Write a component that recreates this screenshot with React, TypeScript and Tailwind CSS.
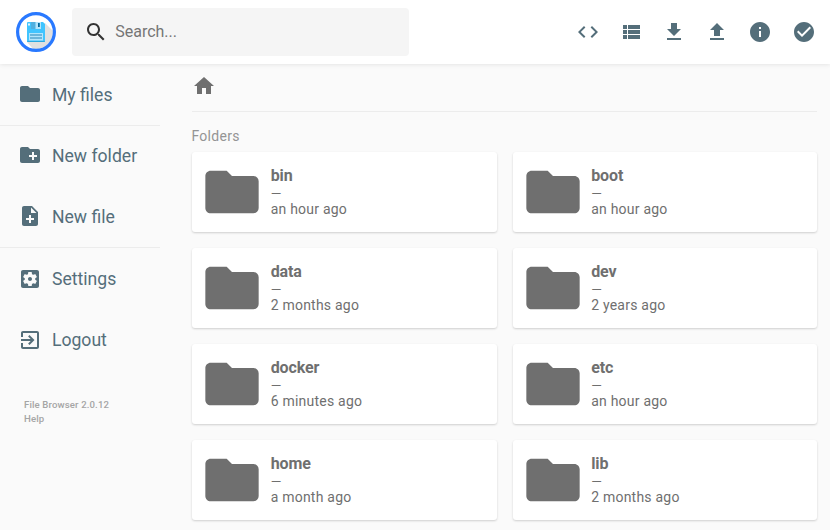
const ICONS = {
  search: "M15.5 14h-.79l-.28-.27C15.41 12.59 16 11.11 16 9.5 16 5.91 13.09 3 9.5 3S3 5.91 3 9.5 5.91 16 9.5 16c1.61 0 3.09-.59 4.23-1.57l.27.28v.79l5 4.99L20.49 19l-4.99-5zm-6 0C7.01 14 5 11.99 5 9.5S7.01 5 9.5 5 14 7.01 14 9.5 11.99 14 9.5 14z",
  code: "M9.4 16.6L4.8 12l4.6-4.6L8 6l-6 6 6 6 1.4-1.4zm5.2 0l4.6-4.6-4.6-4.6L16 6l6 6-6 6-1.4-1.4z",
  viewList: "M4 14h4v-4H4v4zm0 5h4v-4H4v4zM4 9h4V5H4v4zm5 5h12v-4H9v4zm0 5h12v-4H9v4zM9 5v4h12V5H9z",
  download: "M19 9h-4V3H9v6H5l7 7 7-7zM5 18v2h14v-2H5z",
  upload: "M9 16h6v-6h4l-7-7-7 7h4zm-4 2h14v2H5z",
  info: "M12 2C6.48 2 2 6.48 2 12s4.48 10 10 10 10-4.48 10-10S17.52 2 12 2zm1 15h-2v-6h2v6zm0-8h-2V7h2v2z",
  check: "M12 2C6.48 2 2 6.48 2 12s4.48 10 10 10 10-4.48 10-10S17.52 2 12 2zm-2 15l-5-5 1.41-1.41L10 14.17l7.59-7.59L19 8l-9 9z",
  folder: "M10 4H4c-1.1 0-1.99.9-1.99 2L2 18c0 1.1.9 2 2 2h16c1.1 0 2-.9 2-2V8c0-1.1-.9-2-2-2h-8l-2-2z",
  newFolder: "M20 6h-8l-2-2H4c-1.11 0-1.99.89-1.99 2L2 18c0 1.11.89 2 2 2h16c1.11 0 2-.89 2-2V8c0-1.11-.89-2-2-2zm-1 8h-3v3h-2v-3h-3v-2h3V9h2v3h3v2z",
  newFile: "M14 2H6c-1.1 0-1.99.9-1.99 2L4 20c0 1.1.89 2 1.99 2H18c1.1 0 2-.9 2-2V8l-6-6zm2 14h-3v3h-2v-3H8v-2h3v-3h2v3h3v2zm-3-7V3.5L18.5 9H13z",
  settings: "M12 10c-1.1 0-2 .9-2 2s.9 2 2 2 2-.9 2-2-.9-2-2-2zm7-7H5c-1.11 0-2 .9-2 2v14c0 1.1.89 2 2 2h14c1.11 0 2-.9 2-2V5c0-1.1-.89-2-2-2zm-1.75 9c0 .23-.02.46-.05.68l1.48 1.16c.13.11.17.3.08.45l-1.4 2.42c-.09.15-.27.21-.43.15l-1.74-.7c-.36.28-.76.51-1.18.69l-.26 1.85c-.03.17-.18.3-.35.3h-2.8c-.17 0-.32-.13-.35-.29l-.26-1.85c-.43-.18-.82-.41-1.18-.69l-1.74.7c-.16.06-.34 0-.43-.15l-1.4-2.42c-.09-.15-.05-.34.08-.45l1.48-1.16c-.03-.23-.05-.46-.05-.69 0-.23.02-.46.05-.68l-1.48-1.16c-.13-.11-.17-.3-.08-.45l1.4-2.42c.09-.15.27-.21.43-.15l1.74.7c.36-.28.76-.51 1.18-.69l.26-1.85c.03-.17.18-.3.35-.3h2.8c.17 0 .32.13.35.29l.26 1.85c.43.18.82.41 1.18.69l1.74-.7c.16-.06.34 0 .43.15l1.4 2.42c.09.15.05.34-.08.45l-1.48 1.16c.03.23.05.46.05.69z",
  logout: "M10.09 15.59L11.5 17l5-5-5-5-1.41 1.41L12.67 11H3v2h9.67l-2.58 2.59zM19 3H5c-1.11 0-2 .9-2 2v4h2V5h14v14H5v-4H3v4c0 1.1.89 2 2 2h14c1.1 0 2-.9 2-2V5c0-1.1-.9-2-2-2z",
  home: "M10 20v-6h4v6h5v-8h3L12 3 2 12h3v8z",
};

type IconName = keyof typeof ICONS;

function Icon({ name, className = "size-6" }: { name: IconName; className?: string }) {
  return (
    <svg viewBox="0 0 24 24" fill="currentColor" className={`shrink-0 ${className}`}>
      <path d={ICONS[name]} />
    </svg>
  );
}

function Logo() {
  return (
    <svg viewBox="0 0 40 40" className="size-10 shrink-0">
      <circle cx="20" cy="20" r="18.5" fill="#fff" />
      <path d="M29 11l7.8 7.8A17 17 0 0 1 17 37L11 30z" fill="#e0e0e0" />
      <circle cx="20" cy="20" r="18.4" fill="none" stroke="#2979ff" strokeWidth="3.2" />
      <path d="M12 10h15l2 2v17a1 1 0 0 1-1 1H12a1 1 0 0 1-1-1V11a1 1 0 0 1 1-1z" fill="#40c4ff" />
      <path d="M11 29h18a1 1 0 0 1-1 1H12a1 1 0 0 1-1-1z" fill="#29a9e0" />
      <path d="M15 10h10v7H15z" fill="#b3e5fc" />
      <path d="M15 10h4.5v7H15z" fill="#4fb0e0" />
      <path d="M22 11h1.8v4H22z" fill="#01679b" />
      <path d="M12 11.5h2v2h-2z" fill="#e1f5fe" />
      <path d="M13 21h14v7.5H13z" fill="#b3e5fc" />
      <path d="M14 22.6h12v1H14zM14 25.4h12v1H14z" fill="#2686b8" />
    </svg>
  );
}

function SideAction({ icon, label, iconClassName = "mb-px size-6" }: { icon: IconName; label: string; iconClassName?: string }) {
  return (
    <button className="flex h-[61px] w-full items-center pl-[18.4px] text-left">
      <Icon name={icon} className={iconClassName} />
      <span className="ml-[9.6px] text-[17.6px] leading-6">{label}</span>
    </button>
  );
}

function FolderCard({ name, modified }: { name: string; modified: string }) {
  return (
    <div className="flex h-20 items-center rounded-[3px] bg-white pl-2 shadow-[0_1px_3px_rgba(0,0,0,0.06),0_1px_2px_rgba(0,0,0,0.12)]">
      <Icon name="folder" className="size-16" />
      <div className="ml-[6.7px]">
        <p className="text-[16px] leading-[18px] font-bold tracking-[-0.12px]">{name}</p>
        <p className="text-[13.6px] leading-4 tracking-[0.4px]">—</p>
        <p className="text-[14px] leading-[17px] tracking-[0.22px]">{modified}</p>
      </div>
    </div>
  );
}

const TOOLS: IconName[] = ["code", "viewList", "download", "upload", "info", "check"];

const FOLDERS = [
  { name: "bin", modified: "an hour ago" },
  { name: "boot", modified: "an hour ago" },
  { name: "data", modified: "2 months ago" },
  { name: "dev", modified: "2 years ago" },
  { name: "docker", modified: "6 minutes ago" },
  { name: "etc", modified: "an hour ago" },
  { name: "home", modified: "a month ago" },
  { name: "lib", modified: "2 months ago" },
];

export default function App() {
  return (
    <div className="flex h-[530px] w-[830px] flex-col overflow-hidden bg-[#fafafa] font-[Roboto,sans-serif] text-[#6f6f6f]">
      <header className="z-10 flex h-16 shrink-0 items-center bg-white pr-[4.9px] pl-4 shadow-[0_0_5px_rgba(0,0,0,0.12)]">
        <Logo />
        <div className="ml-4 flex h-12 w-[337px] items-center rounded-[4px] bg-[#f5f5f5] pl-3">
          <Icon name="search" className="size-6 text-[#333]" />
          <input
            placeholder="Search..."
            className="ml-[7.2px] w-60 bg-transparent text-[16px] outline-none placeholder:text-[#757575]"
          />
        </div>
        <div className="ml-auto flex text-[#546e7a]">
          {TOOLS.map((tool) => (
            <button key={tool} className="p-[9.6px]">
              <Icon name={tool} />
            </button>
          ))}
        </div>
      </header>
      <div className="flex min-h-0 flex-1">
        <nav className="w-40 shrink-0 text-[#546e7a]">
          <div className="border-b border-[#ececec]">
            <SideAction icon="folder" label="My files" />
          </div>
          <div className="-mt-px border-b border-[#ececec]">
            <SideAction icon="newFolder" label="New folder" />
            <SideAction icon="newFile" label="New file" />
          </div>
          <SideAction icon="settings" label="Settings" iconClassName="size-6" />
          <SideAction icon="logout" label="Logout" iconClassName="size-6" />
          <div className="mt-[28px] pl-6 text-[9.6px] leading-[14px] font-medium tracking-[0.13px] text-[#a5a5a5]">
            <p>File Browser 2.0.12</p>
            <p>Help</p>
          </div>
        </nav>
        <main className="ml-8 w-[625px] shrink-0">
          <div className="flex h-12 items-center border-b border-[#ececec] pb-1">
            <Icon name="home" />
          </div>
          <h2 className="mt-4 mb-[7px] -ml-[0.6px] text-[14px] leading-[17px] tracking-[0.3px] text-[#949494]">Folders</h2>
          <div className="grid grid-cols-2 gap-4">
            {FOLDERS.map((folder) => (
              <FolderCard key={folder.name} name={folder.name} modified={folder.modified} />
            ))}
          </div>
        </main>
      </div>
    </div>
  );
}
